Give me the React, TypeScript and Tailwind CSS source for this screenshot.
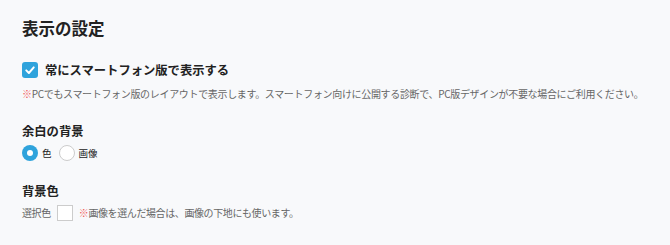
import React from 'react';

export default function App() {
  return (
    <div
      className="min-h-screen bg-[#f8f9fb] pl-[22px] pt-[16px] text-[#222]"
      style={{ fontFamily: '"Noto Sans CJK JP", "Noto Sans", sans-serif' }}
    >
      {/* Title */}
      <h1 className="text-[16.5px] font-bold leading-[24px]">表示の設定</h1>

      {/* Smartphone option */}
      <div className="mt-[21px]">
        <label className="flex items-center gap-[7px]">
          <span className="flex h-[16px] w-[16px] items-center justify-center rounded-[3px] bg-[#2fa3dc]">
            <svg viewBox="0 0 16 16" className="h-[12px] w-[12px]">
              <path d="M3 8.5 L6.5 12 L13 4.5" fill="none" stroke="#fff" strokeWidth="2.6" strokeLinecap="round" strokeLinejoin="round" />
            </svg>
          </span>
          <span className="text-[12.3px] font-bold leading-[18px]">常にスマートフォン版で表示する</span>
        </label>
        <p className="mt-[8px] text-[10px] leading-[14px] tracking-[-0.33px] text-[#666]">
          <span className="text-[#f25a5a]">※</span>PCでもスマートフォン版のレイアウトで表示します。スマートフォン向けに公開する診断で、PC版デザインが不要な場合にご利用ください。
        </p>
      </div>

      {/* Margin background */}
      <div className="mt-[21px]">
        <h2 className="text-[12.3px] font-bold leading-[18px]">余白の背景</h2>
        <div className="mt-[5px] flex items-center text-[9.5px] leading-[16px]">
          <span className="flex h-[16px] w-[16px] items-center justify-center rounded-full bg-[#2fa3dc]">
            <span className="h-[6px] w-[6px] rounded-full bg-white" />
          </span>
          <span className="ml-[4px]">色</span>
          <span className="ml-[7px] h-[16px] w-[16px] rounded-full border border-[#ccc] bg-white" />
          <span className="ml-[4px]">画像</span>
        </div>
      </div>

      {/* Background color */}
      <div className="mt-[21px]">
        <h2 className="text-[12.3px] font-bold leading-[18px]">背景色</h2>
        <div className="mt-[5px] flex items-center text-[10px] leading-[16px] text-[#666]">
          <span className="tracking-[-0.4px]">選択色</span>
          <span className="ml-[6px] h-[16px] w-[16px] border border-[#ccc] bg-white" />
          <span className="ml-[6px] tracking-[-0.4px]">
            <span className="text-[#f25a5a]">※</span>画像を選んだ場合は、画像の下地にも使います。
          </span>
        </div>
      </div>
    </div>
  );
}
